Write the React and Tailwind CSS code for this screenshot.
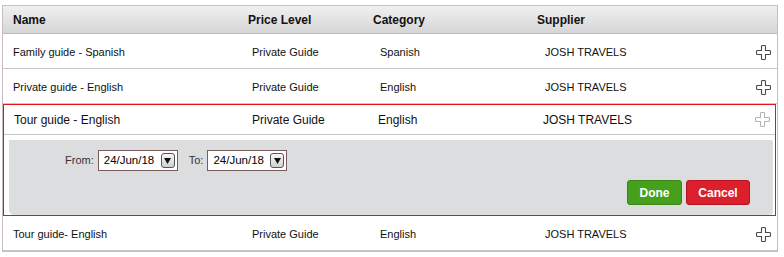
import { useState } from "react";

const rows = [
  { name: "Family guide - Spanish", level: "Private Guide", category: "Spanish", supplier: "JOSH TRAVELS" },
  { name: "Private guide - English", level: "Private Guide", category: "English", supplier: "JOSH TRAVELS" },
  { name: "Tour guide - English", level: "Private Guide", category: "English", supplier: "JOSH TRAVELS", open: true },
  { name: "Tour guide- English", level: "Private Guide", category: "English", supplier: "JOSH TRAVELS" },
];

function PlusIcon({ light }) {
  return (
    <svg width="15" height="15" viewBox="0 0 15 15" className="block">
      <path
        d="M5.5 1.5 Q5.5 0.5 6.5 0.5 H8.5 Q9.5 0.5 9.5 1.5 V5.5 H13.5 Q14.5 5.5 14.5 6.5 V8.5 Q14.5 9.5 13.5 9.5 H9.5 V13.5 Q9.5 14.5 8.5 14.5 H6.5 Q5.5 14.5 5.5 13.5 V9.5 H1.5 Q0.5 9.5 0.5 8.5 V6.5 Q0.5 5.5 1.5 5.5 H5.5 Z"
        fill="#fff"
        stroke={light ? "#b4b4b4" : "#4a4a4a"}
        strokeWidth="1.1"
      />
    </svg>
  );
}

function DateSelect({ value }) {
  return (
    <div className="flex items-center w-[80px] h-[21px] border border-[#7b5c5c] bg-white pl-[5px] pr-[2px]">
      <span className="flex-1 text-[11.5px] text-black">{value}</span>
      <span className="flex items-center justify-center w-[14px] h-[15px] rounded-[3px] border border-[#555] bg-gradient-to-b from-[#f8f8f8] to-[#d0d0d0]">
        <svg width="7" height="6" viewBox="0 0 7 6">
          <path d="M0 0 H7 L3.5 6 Z" fill="#111" />
        </svg>
      </span>
    </div>
  );
}

function Row({ row }) {
  return (
    <div className="flex items-center h-[35px] pl-[10px] pr-[6px] pt-[3px] border-b border-[#c8c8c8] text-[11px] text-[#111]">
      <div className="w-[239px]">{row.name}</div>
      <div className="w-[128px]">{row.level}</div>
      <div className="w-[165px]">{row.category}</div>
      <div className="flex-1">{row.supplier}</div>
      <PlusIcon />
    </div>
  );
}

function OpenRow({ row }) {
  const [from] = useState("24/Jun/18");
  const [to] = useState("24/Jun/18");
  return (
    <div className="border border-[#e3121c] mr-[1px]">
      <div className="flex items-center h-[30px] pl-[10px] pr-[5px] border-b border-[#c8c8c8] text-[12px] text-[#111]">
        <div className="w-[238px]">{row.name}</div>
        <div className="w-[126px]">{row.level}</div>
        <div className="w-[165px]">{row.category}</div>
        <div className="flex-1">{row.supplier}</div>
        <PlusIcon light />
      </div>
      <div className="ml-[5px] mr-[3px] mt-[5px] mb-[1px] h-[74px] bg-[#dcdddf] rounded-b-[4px] shadow-[1px_1px_0_rgba(0,0,0,0.12)] pt-[10px] pl-[56px] pr-[22px] flex flex-col">
        <div className="flex items-center text-[11px] text-[#333]">
          <span className="mr-[4px]">From:</span>
          <DateSelect value={from} />
          <span className="ml-[11px] mr-[4px]">To:</span>
          <DateSelect value={to} />
        </div>
        <div className="flex justify-end gap-[4px] mt-[9px]">
          <button className="w-[55px] h-[25px] rounded-[3px] border border-[#3a8714] bg-[#46a01c] text-white font-bold text-[12px]">
            Done
          </button>
          <button className="w-[64px] h-[25px] rounded-[3px] border border-[#b3141f] bg-[#dc1f2d] text-white font-bold text-[12px]">
            Cancel
          </button>
        </div>
      </div>
    </div>
  );
}

export default function App() {
  return (
    <div className="bg-white w-[784px] h-[257px] pt-[5px] pl-[2px] font-['Liberation_Sans',Arial,sans-serif]">
      <div className="w-[776px] border border-[#c9bcbc]">
        <div className="flex items-center h-[28px] pl-[10px] pt-[1px] border-b border-[#c4b8b8] bg-gradient-to-b from-[#f0f0f0] to-[#d6d6d6] text-[12px] font-bold text-[#111]">
          <div className="w-[235px]">Name</div>
          <div className="w-[125px]">Price Level</div>
          <div className="w-[164px]">Category</div>
          <div className="flex-1">Supplier</div>
        </div>
        {rows.map((row) =>
          row.open ? <OpenRow key={row.name} row={row} /> : <Row key={row.name} row={row} />
        )}
      </div>
    </div>
  );
}
